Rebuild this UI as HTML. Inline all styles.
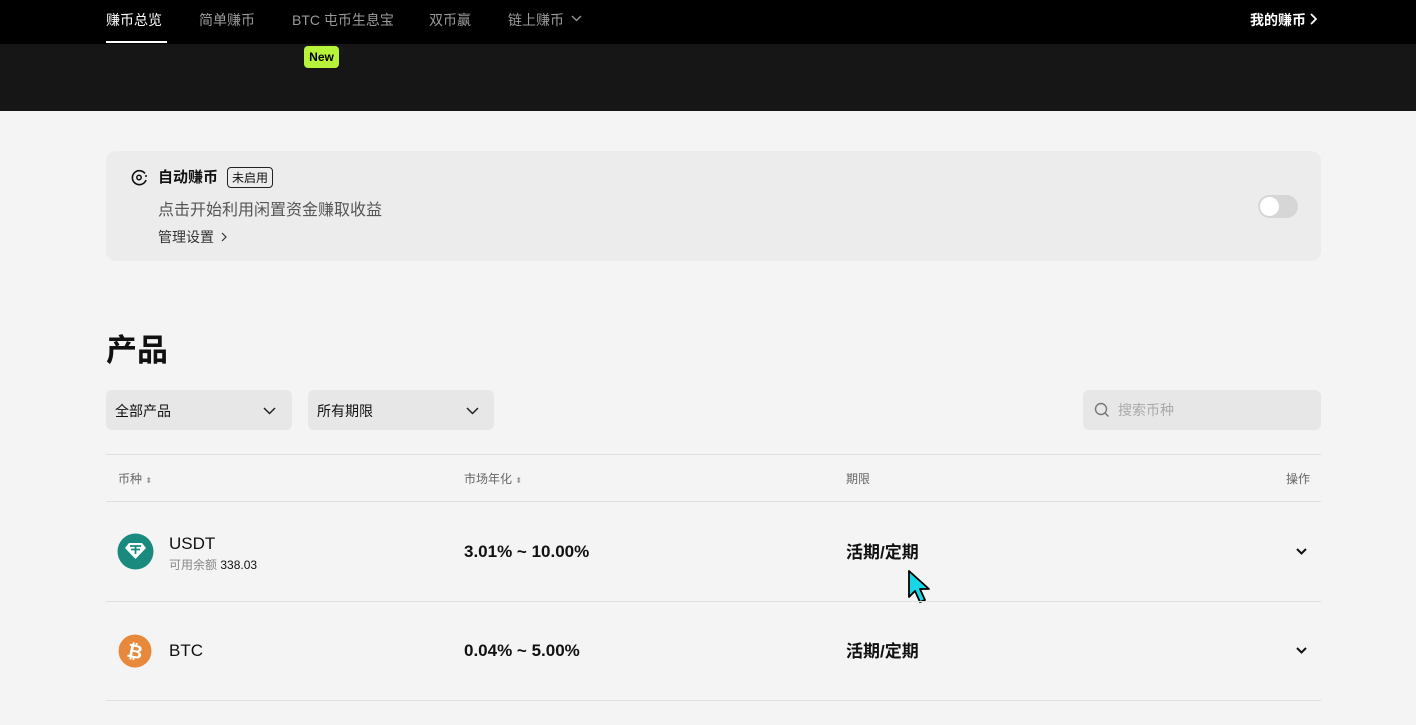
<!DOCTYPE html>
<html><head><meta charset="utf-8"><style>
*{margin:0;padding:0;box-sizing:border-box}
body{width:1416px;height:725px;overflow:hidden;background:#f4f4f4;font-family:"Liberation Sans","Noto Sans CJK SC",sans-serif;color:#111;position:relative}
.a{position:absolute;white-space:nowrap}
.nav{position:absolute;left:0;top:0;width:1416px;height:44px;background:#000}
.hero{position:absolute;left:0;top:44px;width:1416px;height:67px;background:#161616}
.nv{color:#9a9a9a;font-size:14px;top:10px}
.card{position:absolute;left:106px;top:151px;width:1215px;height:110px;background:#ececec;border-radius:10px}
.sel{position:absolute;top:390px;height:40px;width:186px;background:#e7e7e7;border-radius:6px;font-size:14px;padding:11px 9px}
.line{position:absolute;left:106px;width:1215px;height:1px;background:#e0e0e0}
.th{font-size:12px;color:#666;top:470px}
.rt{font-size:17px;font-weight:bold}
.cv{position:absolute}
</style></head><body>
<div class="nav"></div><div class="hero"></div>
<div class="a nv" style="left:106px;color:#fff">赚币总览</div>
<div class="a" style="left:106px;top:41px;width:61px;height:2px;background:#fff"></div>
<div class="a nv" style="left:199px">简单赚币</div>
<div class="a nv" style="left:292px">BTC 屯币生息宝</div>
<div class="a nv" style="left:429px">双币赢</div>
<div class="a nv" style="left:508px">链上赚币</div>
<svg class="cv" style="left:571px;top:15px" width="11" height="7" viewBox="0 0 11 7"><path d="M1 1l4.5 4.5L10 1" fill="none" stroke="#9a9a9a" stroke-width="1.3"/></svg>
<div class="a" style="left:304px;top:46px;width:35px;height:22px;background:#b7f33a;border-radius:4px;font-size:12px;font-weight:bold;color:#000;text-align:center;line-height:22px">New</div>
<div class="a" style="left:1250px;top:10px;color:#fff;font-size:14px;font-weight:bold">我的赚币</div>
<svg class="cv" style="left:1310px;top:13px" width="7" height="12" viewBox="0 0 7 12"><path d="M1 1l5 5-5 5" fill="none" stroke="#fff" stroke-width="1.8"/></svg>

<div class="card"></div>
<svg class="a" style="left:131px;top:169px" width="17" height="17" viewBox="0 0 17 17"><path d="M14 4.5A7 7 0 1 0 15 11" fill="none" stroke="#111" stroke-width="1.6"/><circle cx="8" cy="8.5" r="2.2" fill="none" stroke="#111" stroke-width="1.5"/><circle cx="15" cy="7" r="1" fill="#111"/></svg>
<div class="a" style="left:158px;top:166px;font-size:15px;font-weight:bold">自动赚币</div>
<div class="a" style="left:227px;top:167px;border:1px solid #222;border-radius:4px;font-size:12px;padding:1px 4px">未启用</div>
<div class="a" style="left:158px;top:196px;font-size:16px;color:#555">点击开始利用闲置资金赚取收益</div>
<div class="a" style="left:158px;top:227px;font-size:14px;color:#333">管理设置</div>
<svg class="cv" style="left:221px;top:232px" width="6" height="10" viewBox="0 0 6 10"><path d="M1 1l4 4-4 4" fill="none" stroke="#333" stroke-width="1.2"/></svg>
<div class="a" style="left:1258px;top:195px;width:40px;height:23px;background:#d6d6d6;border-radius:12px"><div style="position:absolute;left:2px;top:2px;width:19px;height:19px;border-radius:50%;background:#fff"></div></div>

<div class="a" style="left:106px;top:325px;font-size:31px;font-weight:bold">产品</div>
<div class="sel" style="left:106px">全部产品</div>
<svg class="cv" style="left:263px;top:407px" width="13" height="8" viewBox="0 0 13 8"><path d="M1 1l5.5 5.5L12 1" fill="none" stroke="#222" stroke-width="1.5"/></svg>
<div class="sel" style="left:308px">所有期限</div>
<svg class="cv" style="left:466px;top:407px" width="13" height="8" viewBox="0 0 13 8"><path d="M1 1l5.5 5.5L12 1" fill="none" stroke="#222" stroke-width="1.5"/></svg>
<div class="a" style="left:1083px;top:390px;width:238px;height:40px;background:#e7e7e7;border-radius:6px"></div>
<svg class="a" style="left:1094px;top:402px" width="16" height="16" viewBox="0 0 16 16"><circle cx="7" cy="7" r="5.5" fill="none" stroke="#777" stroke-width="1.4"/><path d="M11 11l3.5 3.5" stroke="#777" stroke-width="1.4"/></svg>
<div class="a" style="left:1118px;top:400px;font-size:14px;color:#aaa">搜索币种</div>

<div class="line" style="top:454px"></div>
<div class="a th" style="left:118px">币种 <span style="font-size:8px;color:#999">⬍</span></div>
<div class="a th" style="left:464px">市场年化 <span style="font-size:8px;color:#999">⬍</span></div>
<div class="a th" style="left:846px">期限</div>
<div class="a th" style="left:1286px">操作</div>
<div class="line" style="top:501px"></div>

<svg class="a" style="left:117px;top:533px" width="37" height="37" viewBox="0 0 37 37"><circle cx="18.5" cy="18.5" r="18" fill="#1a8a7f"/><path d="M8 15l4-5h13l4 5-10.5 11z" fill="#fff"/><path d="M13 13h11M18.5 13v8M14 16.5h9" stroke="#1a8a7f" stroke-width="1.8" fill="none"/></svg>
<div class="a" style="left:169px;top:534px;font-size:17px">USDT</div>
<div class="a" style="left:169px;top:556px;font-size:12px;color:#888">可用余额 <span style="color:#111">338.03</span></div>
<div class="a rt" style="left:464px;top:542px">3.01% ~ 10.00%</div>
<div class="a rt" style="left:846px;top:538px">活期/定期</div>
<svg class="cv" style="left:1296px;top:548px" width="11" height="7" viewBox="0 0 11 7"><path d="M1 1l4.5 4.5L10 1" fill="none" stroke="#111" stroke-width="2"/></svg>
<svg class="a" style="left:907px;top:569px" width="26" height="36" viewBox="0 0 26 36"><path d="M2 2v26l6-6 5 11 5-2-5-11h9z" fill="#19d6e6" stroke="#000" stroke-width="1.8" stroke-linejoin="round"/></svg>
<div class="line" style="top:601px"></div>

<svg class="a" style="left:118px;top:634px" width="34" height="34" viewBox="0 0 34 34"><circle cx="17" cy="17" r="16.5" fill="#e8883a"/><text x="17" y="24" font-family="Liberation Sans" font-weight="bold" font-size="19" fill="#fff" text-anchor="middle" transform="rotate(12 17 17)">₿</text></svg>
<div class="a" style="left:169px;top:641px;font-size:17px">BTC</div>
<div class="a rt" style="left:464px;top:641px">0.04% ~ 5.00%</div>
<div class="a rt" style="left:846px;top:637px">活期/定期</div>
<svg class="cv" style="left:1296px;top:647px" width="11" height="7" viewBox="0 0 11 7"><path d="M1 1l4.5 4.5L10 1" fill="none" stroke="#111" stroke-width="2"/></svg>
<div class="line" style="top:700px"></div>
</body></html>
